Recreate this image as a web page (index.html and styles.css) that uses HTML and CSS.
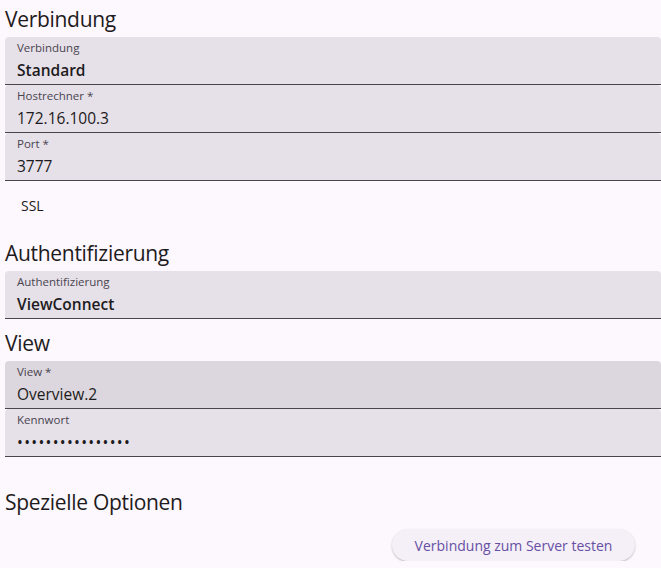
FILE: index.html
```html
<!DOCTYPE html>
<html lang="de">
<head>
<meta charset="utf-8">
<link rel="stylesheet" href="styles.css">
</head>
<body>
<div class="page">
  <section class="section first">
    <h2 class="heading">Verbindung</h2>
    <div class="field">
      <div class="label">Verbindung</div>
      <div class="value strong">Standard</div>
    </div>
    <div class="field">
      <div class="label">Hostrechner *</div>
      <div class="value">172.16.100.3</div>
    </div>
    <div class="field">
      <div class="label">Port *</div>
      <div class="value">3777</div>
    </div>
    <div class="switch-row">SSL</div>
  </section>
  <section class="section">
    <h2 class="heading">Authentifizierung</h2>
    <div class="field">
      <div class="label">Authentifizierung</div>
      <div class="value strong">ViewConnect</div>
    </div>
  </section>
  <section class="section">
    <h2 class="heading">View</h2>
    <div class="field hover">
      <div class="label">View *</div>
      <div class="value">Overview.2</div>
    </div>
    <div class="field">
      <div class="label">Kennwort</div>
      <div class="value dots">••••••••••••••••</div>
    </div>
  </section>
  <section class="section special">
    <h2 class="heading">Spezielle Optionen</h2>
    <div class="actions">
      <button class="btn">Verbindung zum Server testen</button>
    </div>
  </section>
</div>
</body>
</html>
```
FILE: styles.css
```css
html, body {
  margin: 0;
  padding: 0;
  background: #fdf7fe;
}
body {
  font-family: "Open Sans", "Noto Sans", sans-serif;
  color: #1d1b20;
}
.page {
  padding-left: 5px;
  display: flex;
  flex-direction: column;
}
.section {
  display: flex;
  flex-direction: column;
  margin-top: 5px;
}
.section.first {
  margin-top: 0;
}
.section.special {
  margin-top: 26px;
}
.heading {
  margin: 0;
  font-weight: 400;
  font-size: 21px;
  line-height: 28px;
  height: 37px;
  box-sizing: border-box;
  padding-top: 5px;
  letter-spacing: -0.3px;
}
.field {
  background: #e6e0e9;
  border-bottom: 1px solid #49454f;
  border-radius: 4px 4px 0 0;
  height: 48px;
  box-sizing: border-box;
  padding: 2px 12px 0;
}
.field.hover {
  background: #dcd7de;
}
.label {
  font-size: 11.5px;
  line-height: 17px;
  color: #49454f;
}
.value {
  font-size: 15.5px;
  line-height: 25px;
  margin-top: 2px;
  color: #1d1b20;
}
.value.strong {
  font-weight: 600;
}
.value.dots {
  letter-spacing: 1.3px;
}
.switch-row {
  height: 48px;
  display: flex;
  align-items: center;
  padding-left: 16px;
  font-size: 14px;
}
.actions {
  display: flex;
  justify-content: flex-end;
  padding-right: 26px;
  margin-top: 9px;
}
.btn {
  width: 243px;
  height: 32px;
  border: none;
  border-radius: 16px;
  background: #f5eff7;
  color: #6750a4;
  font-family: "Open Sans", "Noto Sans", sans-serif;
  font-size: 14px;
  font-weight: 500;
  box-shadow: 0 1px 2px rgba(0,0,0,0.25);
  cursor: pointer;
}
```
